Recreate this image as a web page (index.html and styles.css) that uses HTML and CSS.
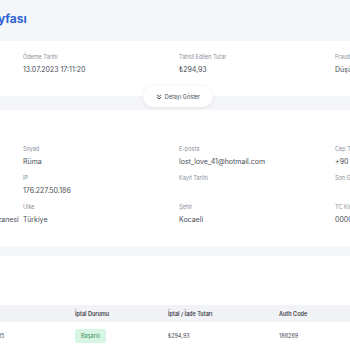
FILE: index.html
```html
<!DOCTYPE html>
<html lang="tr">
<head>
<meta charset="utf-8">
<title>Ödeme Detay Sayfası</title>
<link rel="stylesheet" href="styles.css">
</head>
<body>
<div class="page">
  <header class="top">
    <h1 class="title">Ödeme İşlem Detay Sayfası</h1>
  </header>

  <section class="card summary">
    <div class="grid">
      <div class="field"><span class="label">Sipariş No</span><span class="value">2417</span></div>
      <div class="field"><span class="label">Ödeme Tarihi</span><span class="value">13.07.2023 17:11:20</span></div>
      <div class="field"><span class="label">Tahsil Edilen Tutar</span><span class="value">₺294,93</span></div>
      <div class="field"><span class="label">Fraud Skoru</span><span class="value">Düşük</span></div>
    </div>
  </section>

  <div class="toggle-wrap">
    <button class="toggle" type="button">
      <svg class="chev" viewBox="0 0 10 10" width="6" height="6"><path d="M2 1.5 L5 4.5 L8 1.5 M2 5.5 L5 8.5 L8 5.5" fill="none" stroke="#3c4049" stroke-width="1.6" stroke-linecap="round" stroke-linejoin="round"/></svg>
      <span>Detayı Göster</span>
    </button>
  </div>

  <section class="card customer">
    <h2 class="card-title">Müşteri Bilgileri</h2>
    <div class="grid rows">
      <div class="field"><span class="label">Ad</span><span class="value">Ayşe</span></div>
      <div class="field"><span class="label">Soyad</span><span class="value">Rüma</span></div>
      <div class="field"><span class="label">E-posta</span><span class="value">lost_love_41@hotmail.com</span></div>
      <div class="field"><span class="label">Cep Telefonu</span><span class="value">+90 532 000 00 00</span></div>

      <div class="field"><span class="label">Kullanıcı</span><span class="value">Misafir</span></div>
      <div class="field"><span class="label">IP</span><span class="value">176.227.50.186</span></div>
      <div class="field"><span class="label">Kayıt Tarihi</span><span class="value">&nbsp;</span></div>
      <div class="field"><span class="label">Son Giriş</span><span class="value">&nbsp;</span></div>

      <div class="field"><span class="label">Adres</span><span class="value long">Gölcük Mh. Hayat Cad. No:5 Merkez Eczanesi</span></div>
      <div class="field"><span class="label">Ülke</span><span class="value">Türkiye</span></div>
      <div class="field"><span class="label">Şehir</span><span class="value">Kocaeli</span></div>
      <div class="field"><span class="label">TC Kimlik No</span><span class="value">00000000000</span></div>
    </div>
  </section>

  <section class="card refunds">
    <h2 class="card-title">İade / İptal İşlemleri</h2>
    <table class="table">
      <colgroup>
        <col class="c1"><col class="c2"><col class="c3"><col class="c4"><col class="c5">
      </colgroup>
      <thead>
        <tr>
          <th>İşlem Tarihi</th>
          <th>İşlem No</th>
          <th>İptal Durumu</th>
          <th>İptal / İade Tutarı</th>
          <th>Auth Code</th>
        </tr>
      </thead>
      <tbody>
        <tr>
          <td>13.07.2023</td>
          <td>964123035</td>
          <td><span class="badge">Başarılı</span></td>
          <td>₺294,93</td>
          <td>186269</td>
        </tr>
      </tbody>
    </table>
  </section>
</div>
</body>
</html>
```
FILE: styles.css
```css
html, body {
  margin: 0;
  padding: 0;
  background: #f5f6f9;
  overflow: hidden;
}
body {
  font-family: "Inter", "Noto Sans", sans-serif;
  color: #3f434a;
}
.page {
  margin-left: -153px;
  width: 700px;
}
.top {
  height: 41px;
  display: flex;
  align-items: center;
  padding-left: 20px;
}
.title {
  margin: -5px 0 0 0;
  font-size: 12px;
  font-weight: 700;
  color: #2a62d6;
  white-space: nowrap;
}
.card {
  background: #ffffff;
  padding: 0 20px;
}
.summary {
  height: 55px;
  box-sizing: border-box;
  padding-top: 13px;
}
.grid {
  display: grid;
  grid-template-columns: repeat(4, 156px);
}
.field {
  display: flex;
  flex-direction: column;
  gap: 4px;
  min-width: 0;
}
.label {
  font-size: 5.5px;
  color: #8b9099;
  line-height: 7px;
}
.value {
  font-size: 7px;
  color: #4a4e56;
  line-height: 9px;
  white-space: nowrap;
}
.toggle-wrap {
  display: flex;
  justify-content: center;
  margin: -10px 0 -11px;
  position: relative;
  z-index: 1;
  padding-left: 153px;
  width: 350px;
  box-sizing: content-box;
}
.toggle {
  height: 21px;
  width: 70px;
  border: none;
  border-radius: 11px;
  background: #ffffff;
  box-shadow: 0 1px 4px rgba(30, 40, 60, 0.10);
  display: flex;
  align-items: center;
  justify-content: center;
  gap: 3px;
  font-family: inherit;
  font-size: 5.5px;
  color: #4a4e56;
  padding: 0;
  margin-left: 6px;
}
.chev {
  display: block;
}
.customer {
  margin-top: 14px;
  height: 136px;
  box-sizing: border-box;
  padding-top: 14px;
}
.card-title {
  margin: 0;
  font-size: 8px;
  font-weight: 700;
  height: 22px;
  color: #33373e;
}
.rows {
  row-gap: 9px;
}
.refunds {
  margin-top: 10px;
  height: 110px;
  box-sizing: border-box;
  padding: 12px 0 0 20px;
}
.refunds .card-title {
  height: 37px;
}
.table {
  border-collapse: collapse;
  table-layout: fixed;
  width: 515px;
}
.c1 { width: 100px; }
.c2 { width: 100px; }
.c3 { width: 93px; }
.c4 { width: 111px; }
.c5 { width: 111px; }
.table th {
  background: #f2f3f6;
  height: 17px;
  padding: 0 0 0 8px;
  text-align: left;
  font-size: 5.5px;
  font-weight: 600;
  color: #3f434a;
}
.table td {
  height: 28px;
  padding: 0 0 0 8px;
  font-size: 5.5px;
  color: #4a4e56;
  white-space: nowrap;
}
.badge {
  display: inline-block;
  background: #d7f5e3;
  color: #3b8f5e;
  padding: 4px 6px;
  border-radius: 2px;
  font-size: 5.5px;
}
```
